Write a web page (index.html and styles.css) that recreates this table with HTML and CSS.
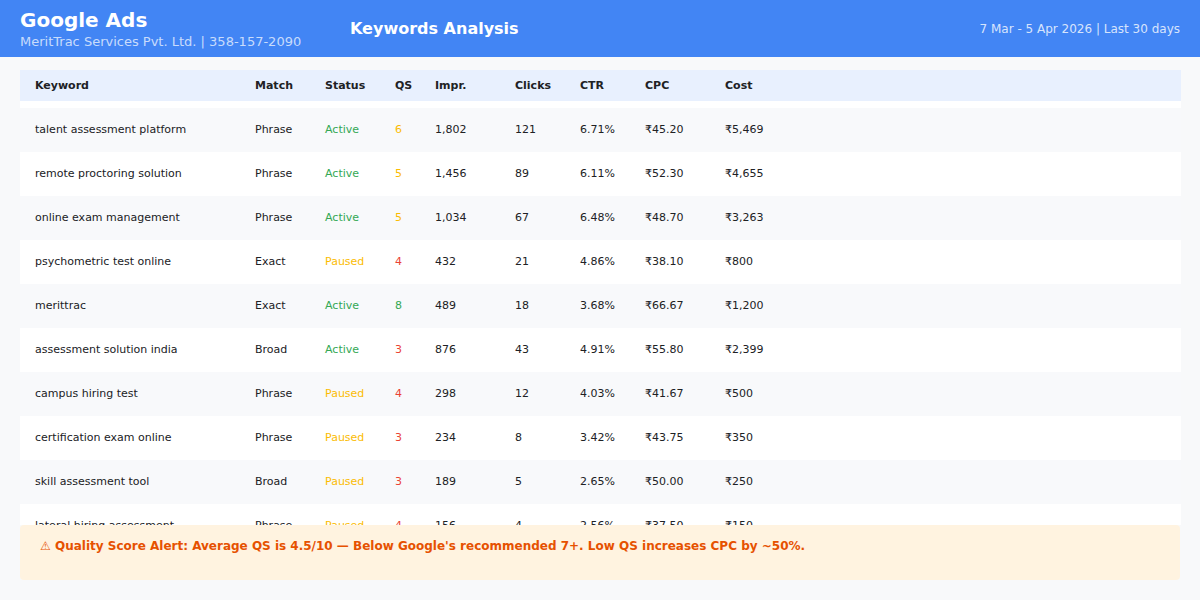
FILE: index.html
```html
<!DOCTYPE html>
<html lang="en">
<head>
<meta charset="utf-8">
<title>Keywords Analysis</title>
<link rel="stylesheet" href="styles.css">
</head>
<body>
<header class="topbar">
  <div class="brand">
    <div class="brand-title">Google Ads</div>
    <div class="brand-sub">MeritTrac Services Pvt. Ltd. | 358-157-2090</div>
  </div>
  <div class="page-title">Keywords Analysis</div>
  <div class="date-range">7 Mar - 5 Apr 2026 | Last 30 days</div>
</header>
<main class="content">
  <section class="table">
    <div class="thead row">
      <div>Keyword</div><div>Match</div><div>Status</div><div>QS</div><div>Impr.</div><div>Clicks</div><div>CTR</div><div>CPC</div><div>Cost</div>
    </div>
    <div class="tbody">
      <div class="row"><div>talent assessment platform</div><div>Phrase</div><div class="active">Active</div><div class="qs-mid">6</div><div>1,802</div><div>121</div><div>6.71%</div><div>₹45.20</div><div>₹5,469</div></div>
      <div class="row"><div>remote proctoring solution</div><div>Phrase</div><div class="active">Active</div><div class="qs-mid">5</div><div>1,456</div><div>89</div><div>6.11%</div><div>₹52.30</div><div>₹4,655</div></div>
      <div class="row"><div>online exam management</div><div>Phrase</div><div class="active">Active</div><div class="qs-mid">5</div><div>1,034</div><div>67</div><div>6.48%</div><div>₹48.70</div><div>₹3,263</div></div>
      <div class="row"><div>psychometric test online</div><div>Exact</div><div class="paused">Paused</div><div class="qs-low">4</div><div>432</div><div>21</div><div>4.86%</div><div>₹38.10</div><div>₹800</div></div>
      <div class="row"><div>merittrac</div><div>Exact</div><div class="active">Active</div><div class="qs-high">8</div><div>489</div><div>18</div><div>3.68%</div><div>₹66.67</div><div>₹1,200</div></div>
      <div class="row"><div>assessment solution india</div><div>Broad</div><div class="active">Active</div><div class="qs-low">3</div><div>876</div><div>43</div><div>4.91%</div><div>₹55.80</div><div>₹2,399</div></div>
      <div class="row"><div>campus hiring test</div><div>Phrase</div><div class="paused">Paused</div><div class="qs-low">4</div><div>298</div><div>12</div><div>4.03%</div><div>₹41.67</div><div>₹500</div></div>
      <div class="row"><div>certification exam online</div><div>Phrase</div><div class="paused">Paused</div><div class="qs-low">3</div><div>234</div><div>8</div><div>3.42%</div><div>₹43.75</div><div>₹350</div></div>
      <div class="row"><div>skill assessment tool</div><div>Broad</div><div class="paused">Paused</div><div class="qs-low">3</div><div>189</div><div>5</div><div>2.65%</div><div>₹50.00</div><div>₹250</div></div>
      <div class="row"><div>lateral hiring assessment</div><div>Phrase</div><div class="paused">Paused</div><div class="qs-low">4</div><div>156</div><div>4</div><div>2.56%</div><div>₹37.50</div><div>₹150</div></div>
    </div>
  </section>
  <div class="alert">⚠ Quality Score Alert: Average QS is 4.5/10 — Below Google's recommended 7+. Low QS increases CPC by ~50%.</div>
</main>
</body>
</html>
```

FILE: styles.css
```css
* { box-sizing: border-box; }
html, body { margin: 0; padding: 0; }
body {
  width: 1200px;
  height: 600px;
  overflow: hidden;
  background: #f8f9fa;
  font-family: "DejaVu Sans", sans-serif;
  color: #202124;
}
.topbar {
  height: 57px;
  background: #4285f4;
  color: #fff;
  display: flex;
  align-items: center;
  padding: 0 20px;
}
.brand { flex: 0 0 330px; padding-top: 2px; }
.brand-title { font-size: 20px; font-weight: bold; line-height: 24px; }
.brand-sub { font-size: 13px; line-height: 18px; color: rgba(255,255,255,0.72); margin-top: 1px; }
.page-title { font-size: 16px; font-weight: bold; }
.date-range { margin-left: auto; font-size: 12px; color: rgba(255,255,255,0.8); }

.content {
  height: 543px;
  padding: 13px 19px 20px 20px;
  display: flex;
  flex-direction: column;
}
.table {
  flex: 1;
  overflow: hidden;
  background: #fff;
  min-height: 0;
}
.row {
  display: grid;
  grid-template-columns: 220px 70px 70px 40px 80px 65px 65px 80px 1fr;
  align-items: center;
  height: 44px;
  font-size: 11px;
}
.row > div { padding-left: 15px; padding-bottom: 1px; white-space: nowrap; }
.thead {
  height: 31px;
  background: #e8f0fe;
  font-weight: bold;
}
.thead > div { padding-bottom: 0; }
.tbody { padding-top: 7px; }
.tbody .row:nth-child(odd) { background: #f8f9fb; }
.active { color: #34a853; }
.paused { color: #fbbc04; }
.qs-mid { color: #fbbc04; }
.qs-low { color: #ea4335; }
.qs-high { color: #34a853; }

.alert {
  flex: 0 0 55px;
  background: #fff3e0;
  color: #e65100;
  border-radius: 4px;
  padding: 14px 20px;
  margin-right: 1px;
  font-size: 12px;
  font-weight: bold;
  line-height: 15px;
}
```
